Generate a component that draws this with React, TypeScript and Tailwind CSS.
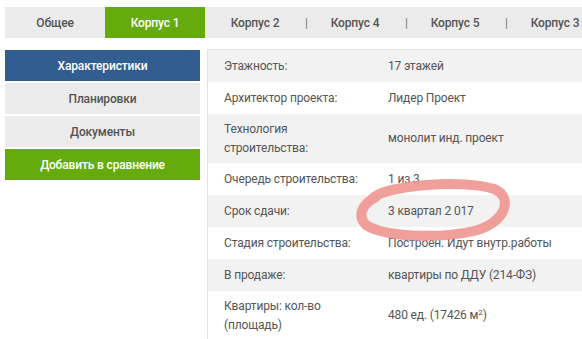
const tabs = [
  { label: "Общее", active: false, sep: false },
  { label: "Корпус 1", active: true, sep: false },
  { label: "Корпус 2", active: false, sep: false },
  { label: "Корпус 4", active: false, sep: true },
  { label: "Корпус 5", active: false, sep: true },
  { label: "Корпус 3", active: false, sep: true },
];

const rows: { label: string[]; value: React.ReactNode }[] = [
  { label: ["Этажность:"], value: "17 этажей" },
  { label: ["Архитектор проекта:"], value: "Лидер Проект" },
  { label: ["Технология", "строительства:"], value: "монолит инд. проект" },
  { label: ["Очередь строительства:"], value: "1 из 3" },
  { label: ["Срок сдачи:"], value: "3 квартал 2 017" },
  { label: ["Стадия строительства:"], value: "Построен. Идут внутр.работы" },
  { label: ["В продаже:"], value: "квартиры по ДДУ (214-ФЗ)" },
  {
    label: ["Квартиры: кол-во", "(площадь)"],
    value: (
      <>
        480 ед. (17426 м<sup className="text-[8px]">2</sup>)
      </>
    ),
  },
];

export default function App() {
  return (
    <div className="h-[339px] w-[582px] overflow-hidden bg-white pl-[5px] pt-[7px] font-['Roboto',sans-serif] text-[12px] tracking-[-0.15px] text-[#555]">
      <div className="flex h-[31px] bg-[#ebebeb] font-medium">
        {tabs.map((t) => (
          <div
            key={t.label}
            className={
              "relative flex w-[100px] shrink-0 items-center justify-center " +
              (t.active ? "bg-[#65ab0c] text-white" : "")
            }
          >
            {t.sep && <span className="absolute left-0 font-normal text-[#777]">|</span>}
            {t.label}
          </div>
        ))}
      </div>

      <div className="mt-[11px] flex gap-[7px]">
        <div className="mt-px flex w-[195px] shrink-0 flex-col gap-[2px] font-medium">
          <div className="flex h-[31px] items-center justify-center bg-[#315d91] text-white">Характеристики</div>
          <div className="flex h-[31px] items-center justify-center bg-[#ebebeb]">Планировки</div>
          <div className="flex h-[31px] items-center justify-center bg-[#ebebeb]">Документы</div>
          <div className="flex h-[31px] items-center justify-center bg-[#65ab0c] text-white">Добавить в сравнение</div>
        </div>

        <div className="relative flex-1 border-l border-t border-[#e2e2e2]">
          {rows.map((r, i) => (
            <div
              key={r.label[0]}
              className={
                "grid grid-cols-[180px_1fr] items-center leading-[19px] " +
                (r.label.length > 1 ? "h-[49px] " : "h-[32px] ") +
                (i % 2 === 0 || i === 4 ? "bg-[#f2f2f2]" : "bg-white")
              }
            >
              <div className="whitespace-nowrap pl-4">
                {r.label.map((l) => (
                  <div key={l}>{l}</div>
                ))}
              </div>
              <div className="whitespace-nowrap">{r.value}</div>
            </div>
          ))}

          <svg
            className="absolute left-[146px] top-[127px]"
            width="160"
            height="64"
            viewBox="0 0 160 64"
          >
            <path
              d="M18 22 C 30 8, 110 2, 140 12 C 160 20, 152 46, 120 54 C 85 62, 30 60, 12 48 C 4 40, 6 28, 22 20"
              fill="none"
              stroke="#ee9590"
              strokeOpacity="0.9"
              strokeWidth="10"
              strokeLinecap="round"
            />
          </svg>
        </div>
      </div>
    </div>
  );
}
